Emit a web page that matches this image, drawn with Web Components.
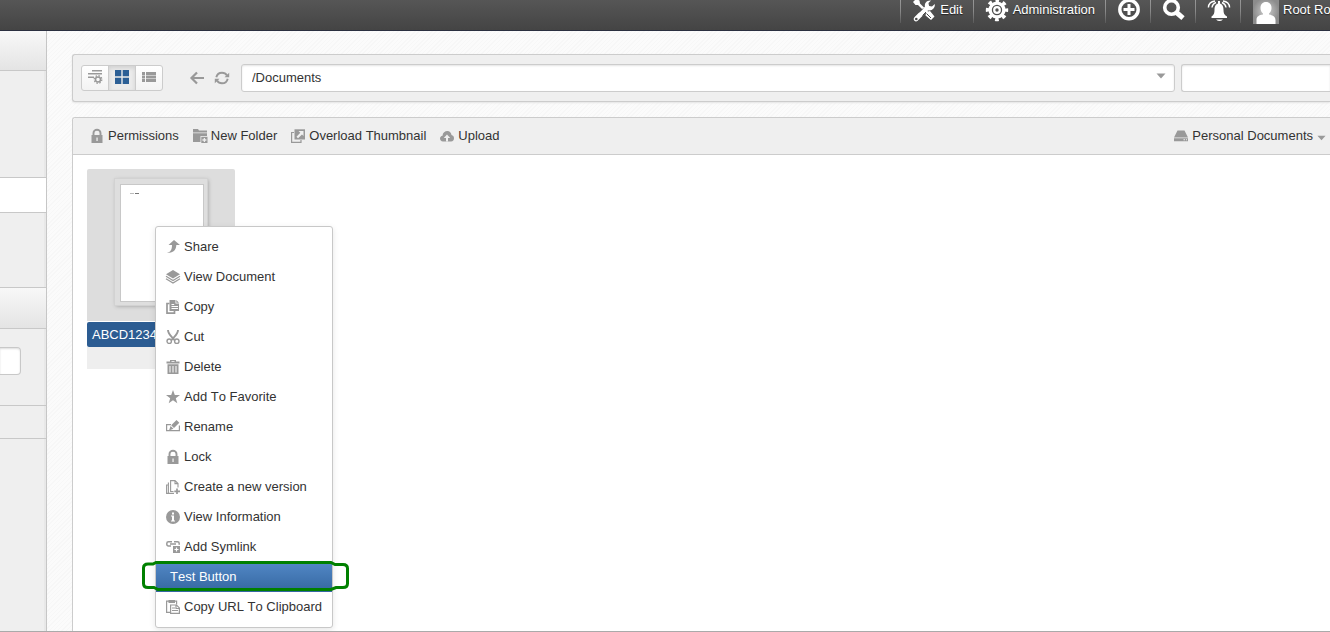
<!DOCTYPE html>
<html lang="en">
<head>
<meta charset="utf-8">
<title>Documents</title>
<style>
body { margin: 0; font: 13px/18px "Liberation Sans", Arial, sans-serif; font-kerning: none; color: #333; }
</style>
</head>
<body>
<dms-app></dms-app>
<script>
const define = (name, html, setup) => {
  const template = document.createElement('template');
  template.innerHTML = html;
  customElements.define(name, class extends HTMLElement {
    constructor() {
      super();
      this.attachShadow({ mode: 'open' }).append(template.content.cloneNode(true));
    }
    connectedCallback() { if (setup) setup(this, this.shadowRoot); }
  });
};

/* Puts the icon named by the host's "icon" attribute at the start of its button. */
const addIcon = (host, root) => {
  const button = root.querySelector('button');
  if (host.title) button.setAttribute('aria-label', host.title);
  if (!host.hasAttribute('icon')) return;
  const icon = document.createElement('ui-icon');
  icon.setAttribute('name', host.getAttribute('icon'));
  button.prepend(icon);
};

/* Every icon: [viewBox, markup]. Shapes use currentColor. */
const ICONS = {
  tools: ['0 0 22 22', '<path d="M0 1l3-3 3.500 1.500.5 3L15 10.500l2-.5 4.500 5.500-3.500 3.500-5.500-4.500.5-2.500L5 4H2.500z"/><path d="M3 18L14.500 6.500" stroke="currentColor" stroke-width="4.600" stroke-linecap="round"/><path d="M12 6c-1-4 2-7 6-6.500L15.500 2l.5 3 3 .5L21.800 3c.6 4-3 7.200-6.800 6.200z"/><circle cx="3.300" cy="18" r="1.300" fill="#4b4b4b"/><path d="M13.500 12.500l4.500 4.500" stroke="#4b4b4b" stroke-width="1"/><path d="M6 11.500l4-4M9.500 14.500l3.500-3.500" stroke="#4b4b4b" stroke-width="1"/>'],
  gear: ['0 0 22 22', '<circle cx="11" cy="9" r="6.900" fill="none" stroke="currentColor" stroke-width="3.400"/><circle cx="11" cy="9" r="9.500" fill="none" stroke="currentColor" stroke-width="3.400" stroke-dasharray="3.700 3.761" stroke-dashoffset="1.850"/><circle cx="11" cy="9" r="2.800" fill="none" stroke="currentColor" stroke-width="2.200"/>'],
  plus: ['0 0 22 22', '<circle cx="11" cy="8.500" r="9.200" fill="none" stroke="currentColor" stroke-width="3.400"/><path d="M9.500 3h3v4h4v3h-4v4h-3v-4h-4V7h4z"/>'],
  search: ['0 0 22 22', '<circle cx="8.500" cy="6.500" r="6.800" fill="none" stroke="currentColor" stroke-width="3.600"/><path d="M13.500 11.500l6.500 5.700" stroke="currentColor" stroke-width="5"/>'],
  bell: ['0 0 22 22', '<path d="M3.500 17v-1.500C6 14 6.500 12 6.500 9 6.500 5 8 2.500 11 2.500S15.500 5 15.500 9c0 3 .5 5 3.500 6.500V17z"/><path d="M8 18.500h7q-3.500 3-7 0M10 0h2v4h-2z"/><path d="M.4 6.500C.6 3 3 .5 7 0M4 6.500C4.300 4 5.500 2.500 8 1.500M21.600 6.500C21.400 3 19 .5 15 0M18 6.500C17.700 4 16.500 2.500 14 1.500" fill="none" stroke="currentColor" stroke-width="1.400"/>'],
  avatar: ['0 0 26 26', '<defs><radialGradient id="a"><stop offset="0" stop-color="#d0d0d0"/><stop offset="1" stop-color="#8c8c8c"/></radialGradient></defs><path fill="url(#a)" d="M0 0h26v26H0z"/><path d="M13 4c3.500 0 5.500 2.500 5.500 6 0 2.500-1 4.500-2.500 5.500v1c4 .5 6.500 2 6.500 5.500v4h-19v-4c0-3.500 2.500-5 6.500-5.500v-1C8.500 14.500 7.500 12.500 7.500 10c0-3.500 2-6 5.500-6z"/>'],
  settings: ['0 0 14 14', '<path d="M4 0h10v1.500H4zM0 3h14v1.500H0zM0 6.500h6V8H0z"/><circle cx="10" cy="9.500" r="2.500" fill="none" stroke="currentColor" stroke-width="1.500"/><circle cx="10" cy="9.500" r="3.800" fill="none" stroke="currentColor" stroke-width="1.300" stroke-dasharray="1.500 1.484"/>'],
  grid: ['0 0 14 14', '<path d="M0 0h6.300v6.300H0zM7.700 0H14v6.300H7.700zM0 7.700h6.300V14H0zM7.700 7.700H14V14H7.700z"/>'],
  list: ['0 0 14 14', '<path d="M0 2h3v3H0zM4 2h10v3H4zM0 5.500h3v3H0zM4 5.500h10v3H4zM0 9h3v3H0zM4 9h10v3H4z"/>'],
  back: ['0 0 14 14', '<path d="M7 1.500L1.500 7 7 12.500M2 7h12" fill="none" stroke="currentColor" stroke-width="2.200"/>'],
  refresh: ['0 0 14 14', '<path d="M1.300 6.300C2 3.300 4 1.700 7 1.700c2 0 3.800.8 5 2.800M12.700 7.700C12 10.700 10 12.300 7 12.300c-2 0-3.800-.8-5-2.800" fill="none" stroke="currentColor" stroke-width="1.900"/><path d="M9.500 6.200H14.200V1.700zM4.500 7.800H-.2v4.500z"/>'],
  lock: ['0 0 14 14', '<path d="M3.500 7V4a3.500 3.200 0 0 1 7 0v3" fill="none" stroke="currentColor" stroke-width="1.900"/><path d="M1.500 6h11v8h-11z"/><path d="M6.400 8.500h1.300V12H6.400z" fill="#eee"/>'],
  folder: ['0 0 14 14', '<path d="M0 0h5l1 1.500h8V3.500H0zM0 4.300h14V7H7.500v6H0z"/><path d="M8.300 7.800H14.500V14H8.300z"/><path d="M11.400 9v4M9.400 11h4" stroke="#eee" stroke-width="1.300"/>'],
  overload: ['0 0 14 14', '<path d="M3 3.500H.6v9.900H10V11" fill="none" stroke="currentColor" stroke-width="1.200"/><path d="M3.500.3H14V10.500H3.500z"/><path d="M7.500 2h5v5L11 5.500 7 9.200 5.500 7.700l3.800-4z" fill="#efefef"/>'],
  cloud: ['0 0 14 14', '<path d="M3 12.500C1 12.500 0 11 0 9.500S1 7 2.500 6.700C2.800 3.500 5 2 7.300 2c2.500 0 4 1.700 4.200 4C13 6.400 14 7.500 14 9.300s-1 3.200-3 3.200z"/><path d="M7 5.500L3.800 9H6v3.500h2V9h2.200z" fill="#efefef"/>'],
  drive: ['0 0 14 14', '<path d="M3.500 1.500h7L14 8.500H0zM0 9.200h14v3H0z"/><path d="M9.500 10.200H11v1H9.500zM12 10.200h1v1h-1z" fill="#efefef"/>'],
  caret: ['0 0 10 6', '<path d="M.5.500h9L5 5.500z"/>'],
  share: ['0 0 14 14', '<path d="M8 0l6 5H10.300c0 5-3 8-9.500 8 4-1 5.200-3.500 5.200-8H2.500z"/>'],
  layers: ['0 0 14 14', '<path d="M7 0l7 4.200-7 4.300-7-4.300z"/><path d="M0 6.300l7 4.200 7-4.200M0 8.700l7 4.300 7-4.300" fill="none" stroke="currentColor" stroke-width="1.300"/>'],
  copy: ['0 0 14 14', '<path d="M3.500 3.500H1v9.700h7.500V11" fill="none" stroke="currentColor" stroke-width="1.700"/><path d="M3.500 0h6v3.500H13V11H3.500zM10.300 0L13 2.700h-2.700z"/><path d="M5.500 4.500h2.700M5.500 6.500H12M5.500 8.500H12" stroke="#fff"/>'],
  cut: ['0 0 14 14', '<path d="M2 0c0 4 2.500 5.500 6.500 10M12 0c0 4-2.500 5.500-6.500 10" fill="none" stroke="currentColor" stroke-width="1.900"/><circle cx="3.200" cy="11.200" r="2.200" fill="none" stroke="currentColor" stroke-width="1.400"/><circle cx="10.800" cy="11.200" r="2.200" fill="none" stroke="currentColor" stroke-width="1.400"/>'],
  trash: ['0 0 14 14', '<path d="M.5 1.500H4V0h6v1.500h3.500v2H.5zM1.500 4.300h11V14h-11z"/><path d="M5.500 1h3v.8h-3zM3.500 6h1v6.500h-1zM6.500 6h1v6.500h-1zM9.500 6h1v6.500h-1z" fill="#fff"/>'],
  star: ['0 0 14 14', '<path d="M7 0l1.800 5H14L9.800 8.200l1.500 5L7 10.200l-4.300 3 1.500-5L0 5h5.200z"/>'],
  rename: ['0 0 14 14', '<path d="M5 4.600H.6v6h12.800V5.500" fill="none" stroke="currentColor" stroke-width="1.200"/><path d="M10.500 0L13.300 2.800 8 8 5.200 5.300zM4.600 6l2.900 2.700-4.500 1.800z"/>'],
  version: ['0 0 14 14', '<path d="M7.500 11.500H4.600V.6H9l3 3v4M9 .6v3h3M3 3H2.400v10.400H8M2 5H.6v8.400h1.800" fill="none" stroke="currentColor" stroke-width="1.100"/><path d="M11 8.500v5.500M8.300 11.300h5.700" stroke="currentColor" stroke-width="1.700"/>'],
  info: ['0 0 14 14', '<circle cx="7" cy="7" r="7"/><path d="M6 2.500h2v2H6zM5 5.500h3v5h1v1H5v-1h1v-4H5z" fill="#fff"/>'],
  symlink: ['0 0 14 14', '<path d="M5 6H2.500Q.8 6 .8 4.300V3.400q0-1.600 1.700-1.600H6M8 1.800h3.500q1.700 0 1.700 1.600v1.400M4 3.900h6" fill="none" stroke="currentColor" stroke-width="1.500"/><path d="M7 6h7v7H7z"/><path d="M10.500 7.500v4M8.500 9.500h4" stroke="#fff" stroke-width="1.200"/>'],
  clipboard: ['0 0 14 14', '<path d="M5 12.400H.6V1.200h10V4.500" fill="none" stroke="currentColor" stroke-width="1.200"/><path d="M2.500 0h6.500v3H2.500z"/><path d="M4.600 5h5.900l2.900 2.900v5.500H4.600zM6 8h3M6 10.500h6M10 5.500v3h3" fill="none" stroke="currentColor" stroke-width="1.200"/>']
};

define('ui-icon', `
<style>
  :host { display: block; flex: none; width: var(--icon-width, 14px); height: var(--icon-height, 14px); }
  svg { display: block; width: 100%; height: 100%; overflow: visible; fill: currentColor; }
</style><svg aria-hidden="true"></svg>`, (host, root) => {
  const [box, markup] = ICONS[host.getAttribute('name')];
  const svg = root.querySelector('svg');
  svg.setAttribute('viewBox', box);
  svg.innerHTML = markup;
});

define('top-item', `
<style>
  :host { display: flex; flex: none; border-left: 1px solid; border-image: linear-gradient(#999, #888 50%, #555) 1; height: 23px; }
  button { display: flex; align-items: flex-start; gap: 5px; border: 0; background: none; color: #fff; font: inherit; padding: 1px 10px 0 12px; text-shadow: 0 1px 1px #222; white-space: nowrap; }
  :host([user]) button { gap: 4px; }
  ui-icon { --icon-width: 22px; --icon-height: 22px; }
  :host([user]) ui-icon { --icon-width: 26px; --icon-height: 26px; margin-top: -3px; }
</style><button type="button"><slot></slot></button>`, addIcon);

define('top-bar', `
<style>
  :host { display: block; height: 30px; flex: none; background: linear-gradient(#565656, #444); border-bottom: 1px solid #2b3040; overflow: hidden; }
  nav { display: flex; justify-content: flex-end; }
  top-item[user] { width: 89px; }
</style>
<nav>
  <top-item icon="tools">Edit</top-item>
  <top-item icon="gear">Administration</top-item>
  <top-item icon="plus" title="Create"></top-item>
  <top-item icon="search" title="Search"></top-item>
  <top-item icon="bell" title="Notifications"></top-item>
  <top-item icon="avatar" user>Root Ro</top-item>
</nav>`);

define('side-bar', `
<style>
  :host { display: flex; flex-direction: column; flex: none; width: 46px; border-right: 1px solid #c6c6c6; background: #efefef; }
  .head { height: 39px; background: linear-gradient(#f8f8f8, #e4e4e4); border-bottom: 1px solid #c8c8c8; }
  .head.second { height: 40px; border-top: 1px solid #c8c8c8; }
  .body { box-shadow: inset -2px 0 #e8e8e8; }
  .above { height: 106px; }
  .below { height: 74px; }
  .selected { height: 34px; background: #fff; border: solid #c8c8c8; border-width: 1px 0; }
  .filter { height: 58px; padding-top: 18px; border-bottom: 1px solid #c8c8c8; }
  input { display: block; box-sizing: border-box; width: 21px; height: 28px; border: 1px solid #c8c8c8; border-left: 0; border-radius: 0 4px 4px 0; background: #fff; box-shadow: inset 0 1px 2px #ddd; padding: 0; }
  .row { height: 32px; border-bottom: 1px solid #c8c8c8; }
  .rest { flex: 1; }
</style>
<div class="head"></div>
<div class="body above"></div>
<div class="selected"></div>
<div class="body below"></div>
<div class="head second"></div>
<div class="body filter"><input type="text" aria-label="Filter"></div>
<div class="body row"></div>
<div class="body rest"></div>`);

define('view-switch', `
<style>
  :host { display: flex; flex: none; border: 1px solid #ccc; border-radius: 3px; overflow: hidden; background: linear-gradient(#fff, #f3f3f3); }
  button { display: flex; width: 26px; height: 24px; padding: 4px 6px; border: 0; background: none; color: #999; box-sizing: border-box; }
  button + button { width: 27px; border-left: 1px solid #ccc; }
  button[aria-pressed=true] { background: #ebebeb; color: #2c5f95; box-shadow: inset 0 2px 4px #d0d0d0; }
</style>
<button type="button" aria-label="Settings"><ui-icon name="settings"></ui-icon></button>
<button type="button" aria-label="Thumbnails" aria-pressed="true"><ui-icon name="grid"></ui-icon></button>
<button type="button" aria-label="List"><ui-icon name="list"></ui-icon></button>`);

define('path-bar', `
<style>
  :host { display: flex; align-items: center; height: 46px; padding-left: 8px; border: 1px solid #ccc; border-right: 0; border-radius: 3px 0 0 3px; background: #efefef; box-shadow: 0 1px 2px #e4e4e4; }
  .nav { display: flex; gap: 11px; margin: 0 12px 0 27px; color: #999; }
  .nav button { display: block; padding: 0; border: 0; background: none; color: inherit; }
  .path { display: block; position: relative; flex: 1; margin-right: 6px; }
  .path ui-icon { position: absolute; right: 9px; top: 9px; color: #999; --icon-width: 10px; --icon-height: 6px; }
  select, input { display: block; box-sizing: border-box; width: 100%; height: 28px; border: 1px solid #ccc; border-radius: 3px; background: #fff; color: #333; font: inherit; box-shadow: inset 0 1px 2px #e4e4e4; }
  select { appearance: none; padding: 0 24px 0 10px; }
  input { width: 149px; border-right: 0; border-radius: 3px 0 0 3px; padding: 0 8px; }
</style>
<view-switch></view-switch>
<div class="nav">
  <button type="button" aria-label="Back"><ui-icon name="back"></ui-icon></button>
  <button type="button" aria-label="Refresh"><ui-icon name="refresh"></ui-icon></button>
</div>
<div class="path">
  <select aria-label="Path"><option>/Documents</option></select>
  <ui-icon name="caret"></ui-icon>
</div>
<input type="text" aria-label="Search">`);

define('tool-button', `
<style>
  :host { display: block; flex: none; }
  button { display: flex; align-items: center; gap: 4px; padding: 0; border: 0; background: none; color: #333; font: inherit; }
  ui-icon { color: #999; }
  .caret { --icon-width: 9px; --icon-height: 6px; margin-top: 3px; }
  :host(:not([menu])) .caret { display: none; }
</style><button type="button"><slot></slot><ui-icon class="caret" name="caret"></ui-icon></button>`, addIcon);

define('menu-item', `
<style>
  :host { display: block; position: relative; }
  button { display: flex; align-items: center; gap: 4px; width: 100%; height: 30px; padding: 0 10px; border: 0; background: none; color: #333; font: inherit; text-align: left; white-space: nowrap; }
  ui-icon { color: #999; }
  :host([active]) button { padding-left: 14px; background: linear-gradient(#5288c6, #3567a1); color: #fff; }
  svg { display: none; position: absolute; left: -16px; top: -4px; width: 212px; height: 36px; }
  :host([active]) svg { display: block; }
</style>
<button type="button" role="menuitem"><slot></slot></button>
<svg viewBox="140 558 212 36" aria-hidden="true"><path d="M156 562.500H331l4 2h8q4.500 0 4.500 4V583.500q0 4-4.500 4h-7l-5 2H158l-4-2h-6q-4.500 0-4.500-4v-15.500q0-4 4.500-4h5z" fill="none" stroke="#008000" stroke-width="3"/></svg>`, addIcon);

define('context-menu', `
<style>
  :host { display: block; width: 176px; padding: 5px 0; border: 1px solid #c8c8c8; border-radius: 3px; background: #fff; box-shadow: 0 2px 6px rgba(0, 0, 0, .1); }
</style><div role="menu"><slot></slot></div>`);

define('file-card', `
<style>
  :host { display: block; position: relative; width: 148px; }
  .thumb { height: 152px; box-sizing: border-box; padding: 10px 0 0 28px; background: #ddd; border-radius: 2px 2px 0 0; }
  .frame { width: 82px; height: 116px; padding: 5px; background: #dedede; box-shadow: 0 0 0 1px #d2d2d2, 1px 1px 4px #999; }
  .page { box-sizing: border-box; height: 118px; width: 84px; border: 1px solid #c8c8c8; background: #fff; padding: 8px 9px; }
  .mark { display: block; width: 9px; height: 2px; }
  .name { margin-top: 1px; padding: 4px 5px 3px; background: #2c5c92; color: #fff; border-radius: 2px; }
  .foot { height: 22px; background: #eee; }
  ::slotted(context-menu) { position: absolute; left: 68px; top: 57px; z-index: 2; }
</style>
<div class="thumb"><div class="frame"><div class="page">
  <svg class="mark" viewBox="0 0 9 2" aria-hidden="true"><path d="M0 .5h4" stroke="#bbb"/><path d="M5 .5h4" stroke="#777"/></svg>
</div></div></div>
<div class="name">ABCD1234</div>
<div class="foot"></div>
<slot></slot>`);

define('document-panel', `
<style>
  :host { display: flex; flex-direction: column; border: 1px solid #ccc; border-width: 1px 0 0 1px; border-radius: 3px 0 0; background: #fff; }
  header { display: flex; align-items: center; gap: 14px; height: 36px; padding: 0 4px 0 17px; border-bottom: 1px solid #ccc; background: #efefef; border-radius: 3px 0 0; }
  .right { margin-left: auto; }
  .files { padding: 14px; }
</style>
<header>
  <tool-button icon="lock">Permissions</tool-button>
  <tool-button icon="folder">New Folder</tool-button>
  <tool-button icon="overload">Overload Thumbnail</tool-button>
  <tool-button icon="cloud">Upload</tool-button>
  <tool-button class="right" icon="drive" menu>Personal Documents</tool-button>
</header>
<div class="files"><slot></slot></div>`);

define('dms-app', `
<style>
  :host { display: flex; flex-direction: column; height: 100vh; box-sizing: border-box; border-bottom: 1px solid #aaa; overflow: hidden; }
  .columns { display: flex; flex: 1; min-height: 0; }
  main { display: flex; flex-direction: column; gap: 15px; flex: 1; min-width: 0; padding: 23px 0 0 25px; background: repeating-linear-gradient(135deg, #fbfbfb 0 2px, #f7f7f7 2px 3px); }
  document-panel { flex: 1; min-height: 0; }
</style>
<top-bar></top-bar>
<div class="columns">
  <side-bar></side-bar>
  <main>
    <path-bar></path-bar>
    <document-panel>
      <file-card>
        <context-menu>
          <menu-item icon="share">Share</menu-item>
          <menu-item icon="layers">View Document</menu-item>
          <menu-item icon="copy">Copy</menu-item>
          <menu-item icon="cut">Cut</menu-item>
          <menu-item icon="trash">Delete</menu-item>
          <menu-item icon="star">Add To Favorite</menu-item>
          <menu-item icon="rename">Rename</menu-item>
          <menu-item icon="lock">Lock</menu-item>
          <menu-item icon="version">Create a new version</menu-item>
          <menu-item icon="info">View Information</menu-item>
          <menu-item icon="symlink">Add Symlink</menu-item>
          <menu-item active>Test Button</menu-item>
          <menu-item icon="clipboard">Copy URL To Clipboard</menu-item>
        </context-menu>
      </file-card>
    </document-panel>
  </main>
</div>`);
</script>
</body>
</html>
